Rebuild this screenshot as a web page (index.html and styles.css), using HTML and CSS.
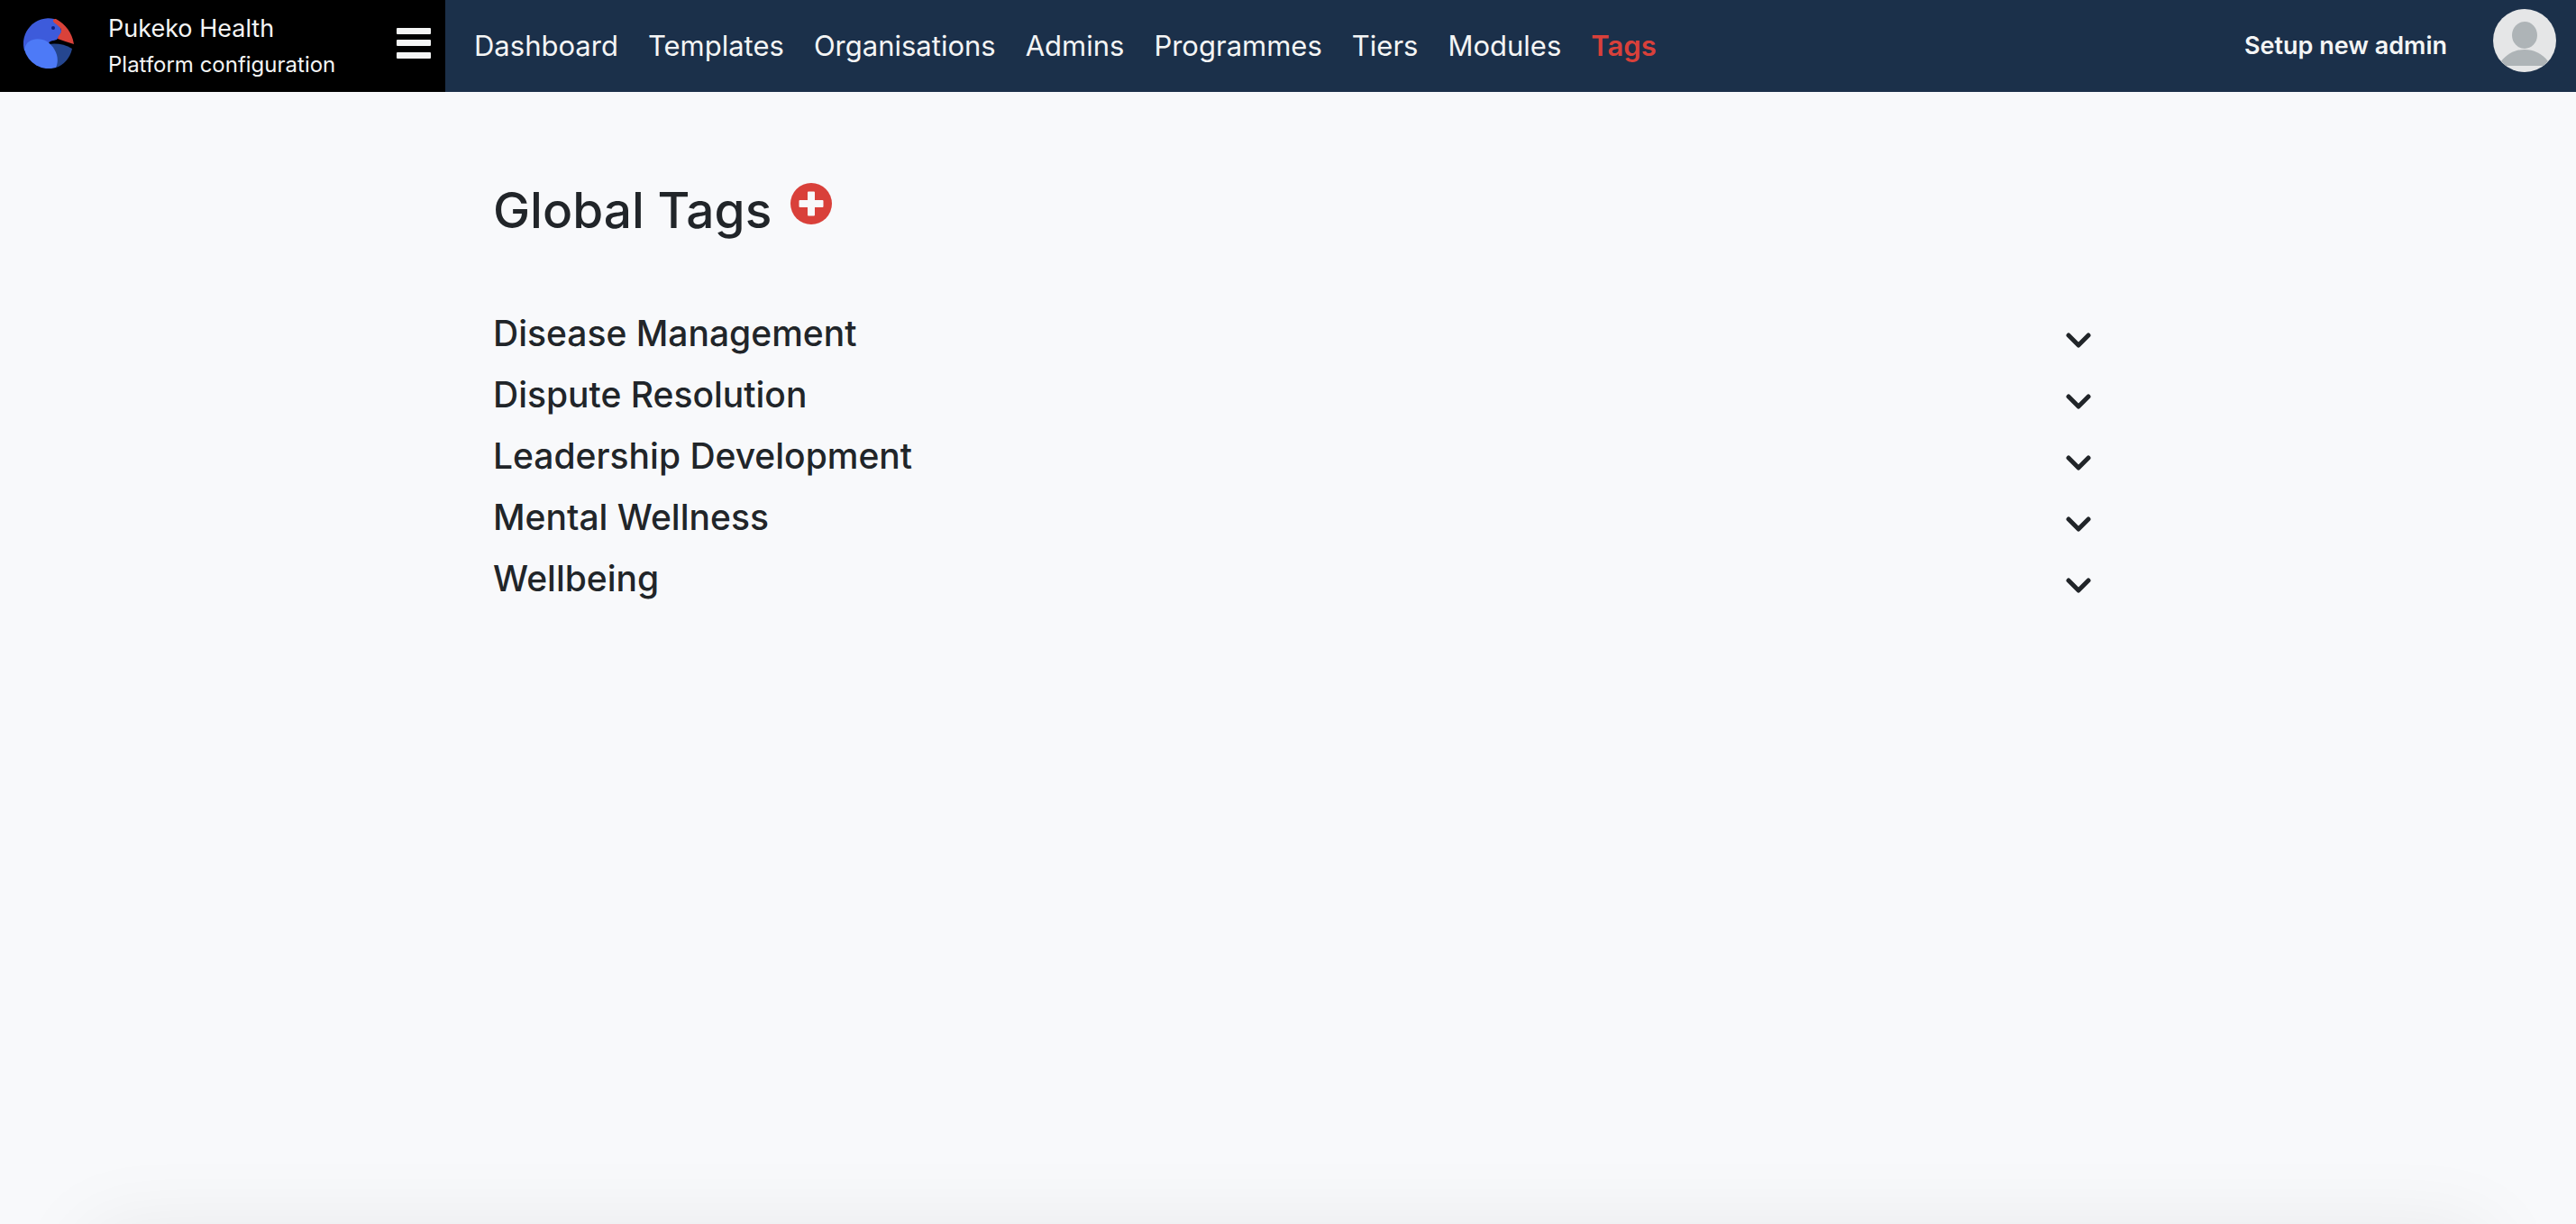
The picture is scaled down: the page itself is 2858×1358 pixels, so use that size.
FILE: index.html
```html
<!DOCTYPE html>
<html lang="en">
<head>
<meta charset="utf-8">
<meta name="viewport" content="width=device-width, initial-scale=1">
<title>Global Tags - Pukeko Health</title>
<link rel="stylesheet" href="styles.css">
</head>
<body>
<header class="topbar">
  <div class="brand">
    <svg class="brand-logo" viewBox="0 0 56 56" aria-hidden="true">
      <path fill="#3d5bdb" d="M1 36A28 28 0 0 1 34 1C37 4 42 9 42 15C42 19 38 22 37 24C34 25 29 25 28 28L26 44Z"/>
      <path fill="#d9423a" d="M34 5C32 3 33 1 36 1A38 38 0 0 1 56 29Q46 26 38 23C38 19 42 18 42 14C42 10 37 8 34 5Z"/>
      <path fill="#25468f" d="M28 29Q42 27 54 34A28 28 0 0 1 36 55Z"/>
      <path fill="#4d7af7" d="M1 35C3 22 18 21 26 26C35 32 41 44 36 55A28 28 0 0 1 1 35Z"/>
      <circle cx="33" cy="11" r="2" fill="#0c1f80"/>
    </svg>
    <div class="brand-text">
      <span class="brand-name">Pukeko Health</span>
      <span class="brand-section">Platform configuration</span>
    </div>
    <button class="menu-button" type="button" aria-label="Menu">
      <svg viewBox="0 0 38 34" aria-hidden="true">
        <rect width="38" height="7" rx="1"/>
        <rect y="13" width="38" height="7" rx="1"/>
        <rect y="27" width="38" height="7" rx="1"/>
      </svg>
    </button>
  </div>
  <nav class="nav" aria-label="Main">
    <a href="#">Dashboard</a>
    <a href="#">Templates</a>
    <a href="#">Organisations</a>
    <a href="#">Admins</a>
    <a href="#">Programmes</a>
    <a href="#">Tiers</a>
    <a href="#">Modules</a>
    <a href="#" class="active" aria-current="page">Tags</a>
  </nav>
  <a href="#" class="setup-link">Setup new admin</a>
  <button class="avatar" type="button" aria-label="Account">
    <svg viewBox="0 0 70 70" aria-hidden="true">
      <circle cx="35" cy="35" r="35" fill="#e5e6e7"/>
      <ellipse cx="35" cy="29" rx="14" ry="15" fill="#aeb4b7"/>
      <path fill="#aeb4b7" d="M9 58C16 49 25 45 35 45S54 49 61 58L56 63H14Z"/>
    </svg>
  </button>
</header>
<main class="page">
  <div class="page-head">
    <h1>Global Tags</h1>
    <button class="add-button" type="button" aria-label="Add tag">
      <svg viewBox="0 0 46 46" aria-hidden="true">
        <circle cx="23" cy="23" r="23" fill="#d9403a"/>
        <path fill="#f8f9fb" d="M20 9.500h6q1 0 1 1V19h8.500q1 0 1 1v6q0 1-1 1H27v8.500q0 1-1 1h-6q-1 0-1-1V27h-8.500q-1 0-1-1v-6q0-1 1-1H19v-8.500q0-1 1-1Z"/>
      </svg>
    </button>
  </div>
  <ul class="tag-groups">
    <li><button type="button" aria-expanded="false">Disease Management<svg viewBox="0 0 28 18" aria-hidden="true"><path d="M3 3 14 14 25 3"/></svg></button></li>
    <li><button type="button" aria-expanded="false">Dispute Resolution<svg viewBox="0 0 28 18" aria-hidden="true"><path d="M3 3 14 14 25 3"/></svg></button></li>
    <li><button type="button" aria-expanded="false">Leadership Development<svg viewBox="0 0 28 18" aria-hidden="true"><path d="M3 3 14 14 25 3"/></svg></button></li>
    <li><button type="button" aria-expanded="false">Mental Wellness<svg viewBox="0 0 28 18" aria-hidden="true"><path d="M3 3 14 14 25 3"/></svg></button></li>
    <li><button type="button" aria-expanded="false">Wellbeing<svg viewBox="0 0 28 18" aria-hidden="true"><path d="M3 3 14 14 25 3"/></svg></button></li>
  </ul>
</main>
<div class="bottom-shade"></div>
</body>
</html>
```
FILE: styles.css
```css
* {
  box-sizing: border-box;
}

body {
  margin: 0;
  background: #f8f9fb;
  color: #212529;
  font-family: Inter, "Liberation Sans", sans-serif;
}

button {
  padding: 0;
  border: 0;
  background: none;
  color: inherit;
  font: inherit;
  cursor: pointer;
}

svg {
  display: block;
}

a {
  color: inherit;
  text-decoration: none;
}

/* Top bar */
.topbar {
  display: flex;
  align-items: center;
  min-height: 102px;
  padding-right: 22px;
  background: #1b304a;
  color: #f4f5f5;
}

.brand {
  display: flex;
  align-items: center;
  align-self: stretch;
  width: 494px;
  padding: 0 16px 6px 26px;
  background: #000;
}

.brand-logo {
  width: 56px;
  height: 56px;
}

.brand-text {
  display: flex;
  flex: 1;
  flex-direction: column;
  padding: 8px 0 0 38px;
}

.brand-name {
  font-size: 27px;
  line-height: 40px;
}

.brand-section {
  font-size: 24px;
  line-height: 40px;
}

.menu-button svg {
  width: 38px;
  height: 34px;
  fill: #f4f5f5;
}

.nav {
  display: flex;
  flex: 1;
  gap: 33px;
  padding-left: 32px;
  font-size: 31px;
  line-height: 40px;
}

.nav .active {
  color: #d9403a;
  font-weight: 600;
}

.setup-link {
  margin-right: 51px;
  font-size: 27px;
  font-weight: 600;
  line-height: 40px;
}

.avatar {
  padding-bottom: 12px;
}

.avatar svg {
  width: 70px;
  height: 70px;
}

/* Page content */
.page {
  max-width: 1782px;
  margin: 0 auto;
  padding: 92px 0 0 9px;
}

.page-head {
  display: flex;
  gap: 21px;
}

h1 {
  margin: 0;
  font-size: 55px;
  font-weight: 500;
  line-height: 78px;
}

.add-button {
  align-self: flex-start;
  padding-top: 9px;
}

.add-button svg {
  width: 46px;
  height: 46px;
}

.tag-groups {
  margin: 0;
  padding: 64px 0 0;
  list-style: none;
}

.tag-groups button {
  display: flex;
  align-items: center;
  justify-content: space-between;
  width: 100%;
  font-size: 39px;
  font-weight: 500;
  line-height: 68px;
}

.tag-groups svg {
  width: 28px;
  height: 18px;
  margin-top: 16px;
  fill: none;
  stroke: #212529;
  stroke-width: 5;
  stroke-linecap: round;
  stroke-linejoin: round;
}

/* Soft shade cast along the lower edge of the window */
.bottom-shade {
  position: fixed;
  right: 100px;
  bottom: -100px;
  left: 100px;
  height: 100px;
  box-shadow: 0 10px 96px rgba(0, 0, 0, 0.08);
  pointer-events: none;
}
```
